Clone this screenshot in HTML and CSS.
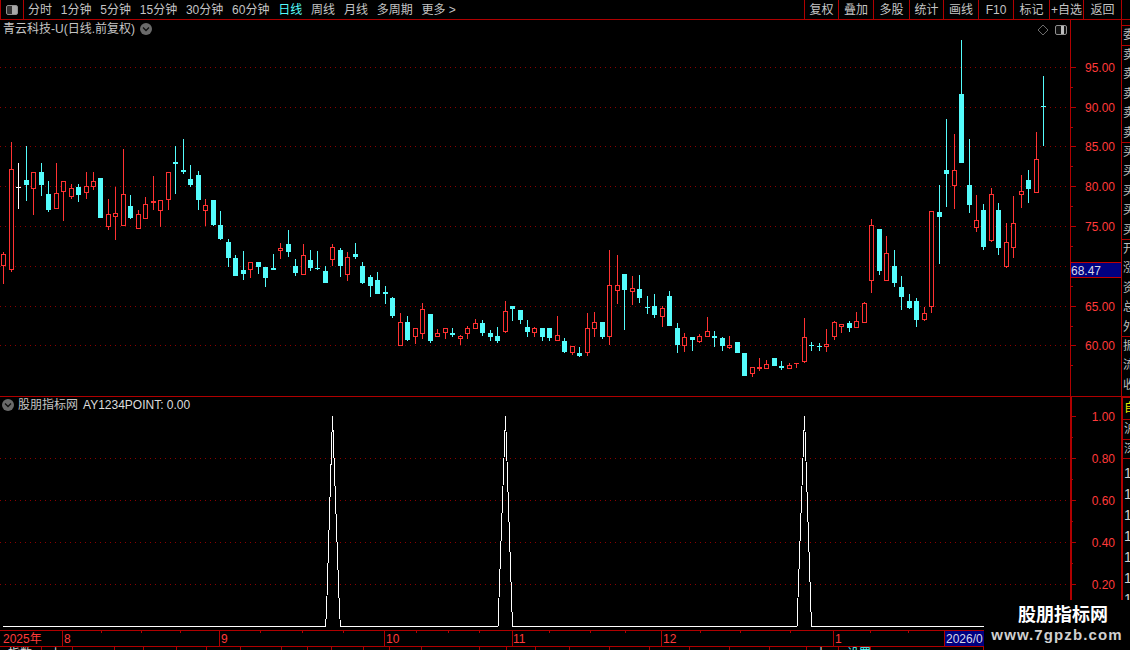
FILE: index.html
```html
<!DOCTYPE html>
<html lang="zh-CN">
<head>
<meta charset="utf-8">
<title>青云科技-U</title>
<link rel="stylesheet" href="styles.css">
</head>
<body>
<div class="app">
  <header class="topbar">
    <div class="panel-btn"><span class="panel-icon"></span></div>
    <nav class="periods">
      <span>分时</span><span>1分钟</span><span>5分钟</span><span>15分钟</span><span>30分钟</span><span>60分钟</span>
      <span class="active">日线</span><span>周线</span><span>月线</span><span>多周期</span><span>更多 &gt;</span>
    </nav>
    <nav class="tools">
      <span>复权</span><span>叠加</span><span>多股</span><span>统计</span><span>画线</span><span>F10</span><span>标记</span><span>+自选</span><span>返回</span>
    </nav>
  </header>

  <section class="pane pane-main">
    <div class="chart">
      <div class="legend legend-main">
        <span>青云科技-U(日线.前复权)</span>
        <svg class="chev" viewBox="0 0 12 12"><circle cx="6" cy="6" r="6"/><path d="M3 4.5 6 7.5 9 4.5"/></svg>
      </div>
      <div class="chart-tools">
        <svg class="diamond" viewBox="0 0 12 12"><path d="M6 1 11 6 6 11 1 6Z"/></svg>
        <span class="panel-icon panel-icon-r"></span>
      </div>
      <svg id="kline" class="plot" width="1070" height="376" viewBox="0 20 1070 376">
        <path class="grid" d="M0 67.5H1070M0 107.5H1070M0 146.5H1070M0 186.5H1070M0 226.5H1070M0 266.5H1070M0 306.5H1070M0 345.5H1070"/>
      </svg>
    </div>
    <svg class="axis" width="51" height="376" viewBox="1070 20 51 376">
      <path class="tick" d="M1070.5 20V396M1070 67.5H1076M1070 107.5H1076M1070 146.5H1076M1070 186.5H1076M1070 226.5H1076M1070 306.5H1076M1070 345.5H1076M1070 87.5H1073M1070 127.5H1073M1070 166.5H1073M1070 206.5H1073M1070 246.5H1073M1070 286.5H1073M1070 326.5H1073M1070 365.5H1073"/>
      <g class="axis-num">
        <text x="1115" y="72">95.00</text><text x="1115" y="112">90.00</text><text x="1115" y="151">85.00</text><text x="1115" y="191">80.00</text>
        <text x="1115" y="231">75.00</text><text x="1115" y="311">65.00</text><text x="1115" y="350">60.00</text>
      </g>
      <rect class="price-box" x="1070.5" y="262.5" width="51" height="15"/>
      <text class="price-text" x="1071" y="275">68.47</text>
    </svg>
    <aside class="side side-main">
      <div class="gap"></div>
      <div class="cell c1">委</div>
      <div class="cell c5">卖<br>卖<br>卖<br>卖<br>卖</div>
      <div class="cell c5">买<br>买<br>买<br>买<br>买</div>
      <div class="cell c5">开<br>涨<br>资<br>总<br>外</div>
      <div class="cell c3">振<br>流<br>收</div>
    </aside>
  </section>

  <section class="pane pane-sub">
    <div class="chart">
      <div class="legend legend-sub">
        <svg class="chev" viewBox="0 0 12 12"><circle cx="6" cy="6" r="6"/><path d="M3 4.5 6 7.5 9 4.5"/></svg>
        <span>股朋指标网</span><span class="indicator">AY1234POINT: 0.00</span>
      </div>
      <svg class="plot" width="1070" height="233" viewBox="0 397 1070 233">
        <path class="grid" d="M0 458.5H1070M0 500.5H1070M0 542.5H1070M0 584.5H1070"/>
        <path class="signal" d="M3 626.5H325.5L326.5 612 332.5 416 339.5 612 340.5 626.5H498L498.500 612 505.500 416 512 612 512.500 626.5H797L797.500 612 804.500 416 811 612 811.500 626.5H984"/>
      </svg>
    </div>
    <svg class="axis" width="51" height="233" viewBox="1070 397 51 233">
      <path class="tick tick-bold" d="M1071 397V630"/>
      <path class="tick" d="M1070 416.5H1076M1070 458.500H1076M1070 500.500H1076M1070 542.500H1076M1070 584.500H1076M1070 437.500H1073M1070 479.500H1073M1070 521.500H1073M1070 563.500H1073M1070 605.500H1073"/>
      <g class="axis-num">
        <text x="1115" y="421">1.00</text><text x="1115" y="463">0.80</text><text x="1115" y="505">0.60</text><text x="1115" y="547">0.40</text><text x="1115" y="589">0.20</text>
      </g>
    </svg>
    <aside class="side side-sub">
      <div class="cell cy"><span class="yellow">自</span></div>
      <div class="cell cs">沪</div>
      <div class="cell cs">深</div>
      <div class="cell cd">1<br>1<br>1<br>1<br>1<br>1<br>1</div>
    </aside>
  </section>

  <svg class="timeline" width="1130" height="17" viewBox="0 630 1130 17">
    <path class="tick" d="M0 630.5H1130M0 646.5H1130"/>
    <path class="tick" d="M62.5 631V646M219.5 631V646M384.5 631V646M512.5 631V646M661.500 631V646M833.500 631V646M944.500 631V646"/>
    <path class="tick" d="M101.500 631V633M141.500 631V633M180.500 631V633M260.500 631V633M302.500 631V633M343.500 631V633M416.500 631V633M448.500 631V633M479.500 631V633M549.500 631V633M590.500 631V633M625.500 631V633M700.500 631V633M740.500 631V633M790.500 631V633M870.500 631V633M908.500 631V633"/>
    <rect class="year-box" x="945" y="631" width="40" height="15"/>
    <g class="axis-num axis-left">
      <text x="3" y="643">2025年</text><text x="64" y="643">8</text><text x="221" y="643">9</text><text x="386" y="643">10</text><text x="513" y="643">11</text><text x="663" y="643">12</text><text x="835" y="643">1</text>
    </g>
    <text class="price-text" x="946" y="643">2026/0</text>
  </svg>

  <footer class="footer">
    <span>指数</span><span>上</span><span></span><span></span><span></span><span></span><span></span><span></span><span></span><span></span><span></span><span></span><span></span><span></span><span></span><span></span><span></span><span></span><span></span><span></span><span></span><span></span><span></span><span>十</span><span class="cyan">设置</span><span></span>
  </footer>

  <aside class="watermark">
    <div class="wm-name">股朋指标网</div>
    <div class="wm-url">www.7gpzb.com</div>
  </aside>
</div>
<script src="chart.js"></script>
</body>
</html>
```

FILE: styles.css
```css
* { box-sizing: border-box; }
html, body { margin: 0; background: #000; }
.app {
  position: relative;
  width: 1130px;
  height: 650px;
  overflow: hidden;
  background: #000;
  color: #c4c4c4;
  font: 12px/1 "Liberation Sans", "Noto Sans CJK SC", sans-serif;
}

/* top bar */
.topbar {
  display: flex;
  height: 20px;
  border-bottom: 1px solid #b00000;
  align-items: stretch;
}
.panel-btn {
  width: 24px;
  display: flex;
  align-items: center;
  justify-content: center;
  border-left: 1px solid #b00000;
  border-right: 1px solid #b00000;
}
.panel-icon {
  display: block;
  width: 12px;
  height: 10px;
  border: 1px solid #909090;
  border-radius: 2px;
  background: linear-gradient(90deg, #333 0 55%, #a8a8a8 55% 100%);
}
.periods {
  display: flex;
  gap: 8.800px;
  align-items: center;
  padding-left: 4px;
  white-space: nowrap;
}
.periods .active { color: #54fcfc; }
.tools {
  margin-left: auto;
  margin-right: 8px;
  display: grid;
  grid-template-columns: 34px 35px 36px 34px 35px 35px 36px 34px 38px;
  border-right: 1px solid #b00000;
}
.tools span {
  display: flex;
  align-items: center;
  justify-content: center;
  border-left: 1px solid #b00000;
  white-space: nowrap;
}

/* panes */
.pane {
  display: grid;
  grid-template-columns: 1070px 51px 9px;
}
.pane-main { height: 377px; border-bottom: 1px solid #b00000; }
.pane-sub { height: 233px; }
.chart { position: relative; }
.plot, .axis, .timeline { display: block; }
.grid {
  fill: none;
  stroke: #8c0000;
  stroke-width: 1;
  stroke-dasharray: 1 4;
}
.tick { fill: none; stroke: #b00000; stroke-width: 1; }
.tick-bold { stroke-width: 2; }
.signal { fill: none; stroke: #fff; stroke-width: 1; shape-rendering: crispEdges; }
.axis-num text {
  fill: #ff3a3a;
  font: 12px "Liberation Sans", "Noto Sans CJK SC", sans-serif;
  text-anchor: end;
}
.axis-left text { text-anchor: start; }
.price-box { fill: #000080; stroke: #c00000; }
.price-text { fill: #d8d8e8; font: 12px "Liberation Sans", sans-serif; }
.year-box { fill: #000080; }

/* overlays on chart */
.legend {
  position: absolute;
  display: flex;
  align-items: center;
  white-space: nowrap;
}
.legend-main { left: 3px; top: 3px; gap: 5px; height: 12px; }
.legend-sub { left: 2px; top: 2px; gap: 4px; height: 12px; }
.indicator { color: #dcdcdc; margin-left: 1px; }
.chev { width: 12px; height: 12px; }
.chev circle { fill: #6a6a6a; }
.chev path { fill: none; stroke: #101010; stroke-width: 1.3; }
.chart-tools {
  position: absolute;
  right: 3px;
  top: 4px;
  display: flex;
  align-items: center;
  gap: 6px;
}
.diamond { width: 12px; height: 12px; }
.diamond path { fill: none; stroke: #6c6c6c; }
.panel-icon-r { background: linear-gradient(90deg, #111 0 50%, #bdbdbd 50% 85%, #111 85%); }

/* right strip */
.side {
  overflow: hidden;
  border-left: 1px solid #b00000;
  display: flex;
  flex-direction: column;
  color: #bdbdbd;
  line-height: 19.4px;
}
.side-sub { border-left-width: 2px; }
.side .gap { height: 5px; }
.cell {
  overflow: hidden;
  border-top: 1px solid #b00000;
  padding-left: 1px;
  white-space: nowrap;
}
.c1 { height: 20px; }
.c5 { height: 97px; }
.c3 { height: 60px; }
.cy { height: 22px; line-height: 21px; }
.yellow { color: #e8e800; }
.cs { height: 19.500px; }
.cd { flex: 1; line-height: 21px; font-size: 14px; color: #d0d0d0; padding-top: 4px; }

/* bottom strip */
.footer {
  display: grid;
  grid-template-columns: 42px 31px 42px 29px 33px 30px 34px 41px 26px 24px 32px 26px 32px 58px 27px 29px 34px 40px 40px 40px 40px 40px 37px 32px 32px 113px;
  height: 3px;
  overflow: hidden;
}
.footer span {
  border-right: 1px solid #b00000;
  padding-left: 8px;
  line-height: 14px;
  height: 14px;
  color: #dcdcdc;
  white-space: nowrap;
  overflow: hidden;
}
.footer .cyan { color: #54fcfc; }

/* watermark */
.watermark {
  position: absolute;
  left: 984px;
  top: 600px;
  width: 146px;
  height: 50px;
  background: #000;
  text-align: center;
  color: #fff;
  font-weight: bold;
  padding-top: 5px;
}
.wm-name { font-size: 18px; line-height: 21px; margin-left: 12px; }
.wm-url { font-size: 15px; line-height: 18px; letter-spacing: 1.100px; color: #d0d0d0; }
```

FILE: chart.js
```javascript
// [high, bodyTop, bodyBottom, low, kind]  r = up (hollow red), c = down (filled cyan), w = doji white, f = doji red
var BARS = [
[252,254,266,284,'r'],[142,169,270,272,'r'],[163,187,188,209,'w'],[146,180,185,201,'c'],[172,172,189,215,'r'],
[163,172,185,196,'c'],[181,194,210,212,'c'],[163,193,209,209,'r'],[181,181,192,221,'r'],[184,188,197,199,'r'],
[184,187,195,202,'c'],[172,186,193,199,'r'],[172,181,187,190,'r'],[178,178,218,218,'c'],[199,214,227,230,'r'],
[187,213,217,240,'r'],[149,194,226,226,'r'],[195,206,218,219,'c'],[210,214,229,229,'r'],[197,204,219,219,'r'],
[176,201,203,210,'f'],[200,200,211,227,'r'],[172,172,200,210,'r'],[146,162,164,194,'c'],[139,170,172,174,'c'],
[165,179,185,187,'c'],[171,175,200,210,'c'],[199,205,211,226,'r'],[200,200,225,226,'c'],[211,225,239,240,'c'],
[239,242,258,267,'c'],[255,258,276,276,'c'],[251,270,274,280,'c'],[262,262,270,278,'r'],[262,262,267,274,'c'],
[267,267,278,287,'c'],[254,268,270,270,'c'],[243,248,251,259,'r'],[230,244,252,257,'c'],[259,266,273,276,'c'],
[244,255,275,275,'r'],[250,260,268,271,'c'],[251,268,269,270,'c'],[266,271,283,283,'c'],[244,247,260,266,'r'],
[248,250,266,277,'c'],[252,257,275,281,'r'],[243,254,257,259,'c'],[262,266,283,284,'c'],[275,277,286,297,'c'],
[272,280,294,294,'c'],[286,292,294,304,'c'],[297,298,316,318,'c'],[313,322,346,346,'r'],[316,322,340,341,'c'],
[328,328,337,344,'r'],[303,309,334,339,'r'],[314,314,341,343,'c'],[329,333,337,337,'r'],[328,328,333,339,'r'],
[328,333,335,337,'c'],[335,336,339,345,'r'],[326,328,334,339,'r'],[319,323,329,329,'r'],[320,323,333,336,'c'],
[330,333,337,341,'c'],[327,336,341,343,'c'],[301,311,332,333,'r'],[306,306,309,321,'c'],[310,310,320,324,'c'],
[320,327,332,337,'c'],[327,328,333,337,'r'],[328,328,337,341,'c'],[328,328,338,341,'c'],[316,335,341,341,'r'],
[338,341,352,353,'c'],[346,346,353,355,'r'],[347,353,356,357,'c'],[313,328,353,356,'r'],[312,322,329,337,'r'],
[322,322,337,339,'c'],[250,285,337,345,'r'],[255,285,291,304,'r'],[274,274,290,330,'c'],[276,288,292,305,'r'],
[275,289,298,303,'c'],[296,307,308,314,'c'],[294,306,315,318,'c'],[306,308,317,327,'r'],[291,296,326,326,'c'],
[323,328,345,353,'c'],[333,337,346,352,'r'],[337,337,340,351,'c'],[334,336,342,343,'r'],[317,331,337,337,'r'],
[331,336,338,347,'c'],[337,338,346,351,'c'],[336,345,348,349,'r'],[342,342,353,353,'c'],[353,353,376,376,'c'],
[367,367,374,377,'r'],[358,367,369,371,'r'],[360,364,369,369,'r'],[358,358,366,366,'c'],[361,366,368,370,'c'],
[363,365,369,369,'r'],[363,363,364,368,'f'],[318,337,362,363,'r'],[342,345,346,351,'c'],[343,346,347,351,'c'],
[329,344,347,352,'r'],[321,322,337,340,'r'],[324,324,327,333,'r'],[321,323,328,332,'c'],[312,321,328,328,'r'],
[302,303,323,323,'r'],[219,225,281,293,'r'],[229,229,271,275,'c'],[236,253,281,281,'r'],[250,266,283,287,'c'],
[276,287,297,310,'c'],[294,301,308,309,'c'],[298,301,320,327,'c'],[307,313,320,321,'r'],[211,211,307,313,'r'],
[185,212,217,264,'c'],[119,170,174,207,'c'],[134,170,186,209,'r'],[40,94,163,163,'c'],[139,185,205,213,'c'],
[195,220,228,232,'r'],[204,210,247,250,'c'],[188,194,241,242,'r'],[203,210,248,255,'c'],[223,242,267,268,'r'],
[196,223,248,258,'r'],[175,191,195,208,'r'],[170,180,189,203,'c'],[132,159,193,193,'r'],[76,106,107,146,'c']
];

var COLORS = { r: '#ff3232', f: '#ff3232', c: '#54fcfc', w: '#ffffff' };
var NS = 'http://www.w3.org/2000/svg';
var svg = document.getElementById('kline');

function add(tag, attrs) {
  var el = document.createElementNS(NS, tag);
  for (var k in attrs) el.setAttribute(k, attrs[k]);
  el.setAttribute('shape-rendering', 'crispEdges');
  svg.appendChild(el);
}

BARS.forEach(function (b, i) {
  var x = Math.round(3.2 + 7.483 * i);
  var color = COLORS[b[4]];
  if (b[1] > b[0]) add('rect', { x: x, y: b[0], width: 1, height: b[1] - b[0], fill: color });
  if (b[3] > b[2]) add('rect', { x: x, y: b[2], width: 1, height: b[3] - b[2], fill: color });
  if (b[4] === 'r') {
    add('rect', { x: x - 1.5, y: b[1] + 0.5, width: 4, height: Math.max(b[2] - b[1] - 1, 1), fill: '#000', stroke: color });
  } else {
    add('rect', { x: x - 2, y: b[1], width: 5, height: b[2] - b[1], fill: color });
  }
});
```
